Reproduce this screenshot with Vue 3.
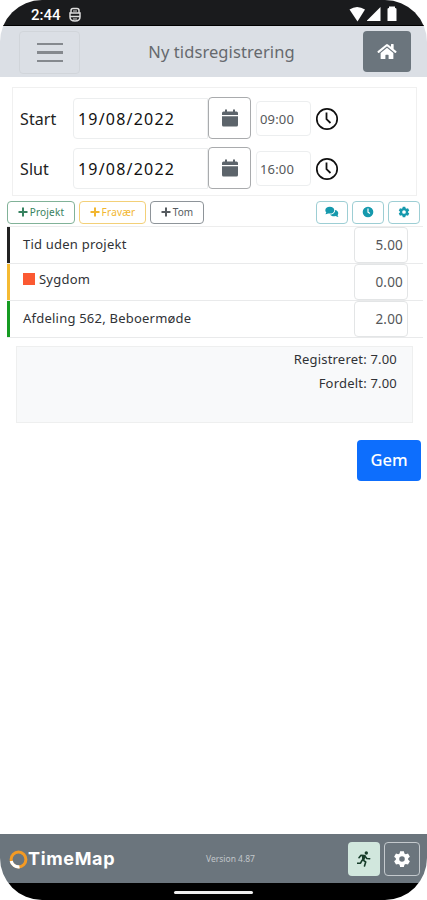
<template>
    <div class="phone">
        <div class="status">
            <span class="time">2:44</span>
            <svg class="app-icon" width="12" height="15" viewBox="0 0 12 15">
                <path d="M2 6V3.500Q2 1.500 4 1.500h4q2 0 2 2V6M1 6h10v4q0 4-5 4t-5-4zM1.500 9.500h9" fill="none" stroke="#ddd" stroke-width="1.500" />
                <path d="M4 4h4M4 12h4" stroke="#ddd" stroke-width="1" />
            </svg>
            <svg class="signals" width="50" height="16" viewBox="0 0 50 16">
                <path d="M0.5 3.5Q8 -1.5 16 3.5L8.5 15.5Z" fill="#fff" />
                <path d="M18 15V14.5L31.5 1V15Z" fill="#fff" />
                <path d="M38.500 3Q38.500 2 40 2V.5h6V2Q47.500 2 47.500 3V15h-9Z" fill="#fff" />
            </svg>
        </div>

        <header class="header">
            <button class="menu"><span></span><span></span><span></span></button>
            <h1>Ny tidsregistrering</h1>
            <button class="home">
                <svg width="20" height="17" viewBox="0 0 576 512">
                    <path fill="#fff" d="M280 148L96 300v164q0 16 16 16h112q16 0 16-16v-96q0-16 16-16h64q16 0 16 16v96q0 16 16 16h112q16 0 16-16V300L296 148q-8-6-16 0zM572 251l-84-69V44q0-12-12-12h-56q-12 0-12 12v72L318 43q-30-23-60 0L4 251q-8 8-2 17l26 31q8 8 17 2L280 107q8-6 16 0l235 194q9 6 17-2l26-31q6-9-2-17z" />
                </svg>
            </button>
        </header>

        <main>
            <section class="period">
                <div v-for="row in periods" :key="row.label" class="period-row">
                    <label>{{ row.label }}</label>
                    <div class="date">{{ row.date }}</div>
                    <button class="calendar">
                        <svg width="16" height="18" viewBox="0 0 16 18">
                            <path fill="#5c646b" d="M0 6V4q0-1.500 1.500-1.500H3V.5h2v2h6v-2h2v2h1.500Q16 2.500 16 4v2zM0 7.200h16V16q0 1.500-1.500 1.500h-13Q0 17.500 0 16z" />
                        </svg>
                    </button>
                    <div class="clock-time">{{ row.time }}</div>
                    <svg class="clock" width="24" height="24" viewBox="0 0 24 24">
                        <circle cx="12" cy="12" r="10.200" fill="none" stroke="#111" stroke-width="1.700" />
                        <path d="M11.500 5.500V12.200L15.500 16" fill="none" stroke="#111" stroke-width="1.800" />
                    </svg>
                </div>
            </section>

            <div class="toolbar">
                <button v-for="b in addButtons" :key="b.text" class="tool" :class="b.type">
                    <svg width="10" height="10" viewBox="0 0 10 10"><path d="M5 .5v9M.5 5h9" stroke="currentColor" stroke-width="2" /></svg>
                    <span>{{ b.text }}</span>
                </button>
                <button class="tool info first">
                    <svg width="14" height="12" viewBox="0 0 14 12">
                        <path fill="currentColor" d="M4.800.8C2.100.8.300 2.300.300 4.200c0 .9.400 1.600 1 2.200L.4 8.200c1.100 0 2-.3 2.600-.8 3.600.8 6.300-.8 6.300-3.200C9.300 2.300 7.500.8 4.800.8z" />
                        <path fill="currentColor" d="M10.100 4c.3 2.700-2.100 4.500-5.100 4.500 1 1.600 3.300 2.200 5.500 1.600.8.500 1.600.8 2.900.8l-.8-1.700C14 7.400 13.200 4.500 10.100 4z" />
                    </svg>
                </button>
                <button class="tool info">
                    <svg width="12" height="12" viewBox="0 0 12 12">
                        <circle cx="6" cy="6" r="5.300" fill="currentColor" />
                        <path d="M6 2.500V6.200l2 1.300" fill="none" stroke="#fff" stroke-width="1.200" />
                    </svg>
                </button>
                <button class="tool info">
                    <svg width="12" height="12" viewBox="0 0 24 24"><path :d="gear" fill="currentColor" fill-rule="evenodd" /></svg>
                </button>
            </div>

            <section class="lines">
                <div v-for="line in lines" :key="line.name" class="line" :class="line.type">
                    <div class="name"><i v-if="line.type === 'absence'"></i><span>{{ line.name }}</span></div>
                    <div class="hours">{{ line.hours }}</div>
                </div>
            </section>

            <section class="summary">
                <div>Registreret: 7.00</div>
                <div>Fordelt: 7.00</div>
            </section>

            <button class="save">Gem</button>
        </main>

        <footer class="footer">
            <div class="brand">
                <svg width="19" height="19" viewBox="0 0 19 19">
                    <circle cx="9.500" cy="9.500" r="7.400" fill="none" stroke="#f39a24" stroke-width="3" />
                    <path d="M2.200 11A7.400 7.400 0 0 0 10.500 16.800" fill="none" stroke="#fff" stroke-width="3.200" />
                </svg>
                <span>TimeMap</span>
            </div>
            <span class="version">Version 4.87</span>
            <button class="run">
                <svg width="14" height="16" viewBox="0 0 14 16">
                    <circle cx="9.300" cy="2" r="1.700" fill="#173d2a" />
                    <path d="M2 6.700l2-2.400 3.500.2-2 4.200 3.200 2.300-1.200 4M5 9.500l-1.500 2.700H.5M7.500 4.500l2.300 3 2.900.2" fill="none" stroke="#173d2a" stroke-width="1.600" stroke-linecap="round" stroke-linejoin="round" />
                    <path d="M4.800 4.500L8.800 4.500 7.500 9 5.200 9z" fill="#173d2a" />
                </svg>
            </button>
            <button class="settings">
                <svg width="18" height="18" viewBox="0 0 24 24"><path :d="gear" fill="#fff" fill-rule="evenodd" /></svg>
            </button>
        </footer>
        <div class="nav"><span></span></div>
    </div>
</template>

<script setup>
const periods = [
    { label: 'Start', date: '19/08/2022', time: '09:00' },
    { label: 'Slut', date: '19/08/2022', time: '16:00' }
];

const addButtons = [
    { text: 'Projekt', type: 'project' },
    { text: 'Fravær', type: 'leave' },
    { text: 'Tom', type: 'empty' }
];

const lines = [
    { name: 'Tid uden projekt', hours: '5.00', type: 'none' },
    { name: 'Sygdom', hours: '0.00', type: 'absence' },
    { name: 'Afdeling 562, Beboermøde', hours: '2.00', type: 'department' }
];

const gear = 'M9.500 1.500h5l.7 3 1.800 1 3-.9 2.500 4.300-2.300 2.100v2l2.300 2.100-2.500 4.300-3-.9-1.800 1-.7 3h-5l-.7-3-1.800-1-3 .9-2.500-4.300L3.800 13v-2L1.500 8.900 4 4.600l3 .9 1.800-1zM12 8.300a3.700 3.700 0 1 0 0 7.400 3.700 3.700 0 0 0 0-7.400z';
</script>

<style>
body {
    margin: 0;
    background: #fff;
}
</style>

<style scoped>
* {
    box-sizing: border-box;
}

.phone {
    width: 427px;
    height: 900px;
    display: flex;
    flex-direction: column;
    overflow: hidden;
    border-radius: 42px;
    background: #fff;
    color: #303236;
    font-family: "Noto Sans", "Open Sans", sans-serif;
    white-space: nowrap;
}

button {
    display: flex;
    align-items: center;
    justify-content: center;
    padding: 0;
    border: 0;
    background: none;
    font-family: inherit;
    flex: none;
}

svg {
    display: block;
    flex: none;
}

.status {
    display: flex;
    height: 26px;
    padding: 0 28px 0 31px;
    background: #1a1b1d;
    border-bottom: 1px solid #000;
    color: #fff;
    flex: none;
}

.time {
    font: 500 15px/30px Roboto, sans-serif;
    width: 38px;
}

.app-icon {
    margin-top: 7px;
}

.signals {
    margin: 6px 0 0 auto;
}

.header {
    display: flex;
    height: 51px;
    padding: 5px 16px 0 19px;
    background: #dbdfe5;
    flex: none;
}

.menu {
    width: 61px;
    height: 43px;
    flex-direction: column;
    gap: 6px;
    border: 1px solid #d1d5da;
    border-radius: 4px;
}

.menu span {
    width: 26px;
    height: 2.500px;
    background: #85898e;
}

h1 {
    flex: 1;
    margin: 0;
    text-align: center;
    color: #66696d;
    font-size: 16.500px;
    font-weight: 400;
    line-height: 42px;
    letter-spacing: .08px;
}

.home {
    width: 48px;
    height: 41px;
    background: #6b757d;
    border-radius: 4px;
}

main {
    display: flex;
    flex: 1;
    flex-direction: column;
}

.period {
    display: flex;
    flex-direction: column;
    gap: 8px;
    height: 109px;
    margin: 10px 10px 0 12px;
    padding: 9px 7px;
    border: 1px solid #f0f0f0;
}

.period-row {
    display: flex;
    align-items: center;
    height: 42px;
}

.period-row label {
    width: 53px;
    padding-top: 2px;
    color: #222;
    font-size: 16px;
    letter-spacing: .1px;
}

.date {
    width: 135px;
    height: 41px;
    padding-left: 4px;
    border: 1px solid #eceeef;
    border-radius: 4px 0 0 4px;
    color: #111;
    font-size: 16px;
    line-height: 40px;
    letter-spacing: 1.2px;
}

.calendar {
    width: 43px;
    height: 42px;
    border: 1px solid #a9abad;
    border-radius: 4px;
}

.clock-time {
    width: 55px;
    height: 35px;
    margin: 0 4px 0 5px;
    padding-left: 3px;
    border: 1px solid #eceeef;
    border-radius: 4px;
    color: #56585a;
    font-size: 13px;
    line-height: 34px;
    letter-spacing: .15px;
}

.clock {
    margin-top: 2px;
}

.toolbar {
    display: flex;
    height: 30px;
    padding: 5px 7px 0 7px;
    gap: 4px;
}

.tool {
    height: 23px;
    gap: 2px;
    border: 1px solid currentColor;
    border-radius: 4px;
    font-size: 10px;
    line-height: 20px;
    padding-bottom: 1px;
}

.project {
    width: 68px;
    border-color: #81b298;
    color: #378260;
    letter-spacing: .2px;
}

.leave {
    width: 67px;
    border-color: #f3d078;
    color: #f2b630;
    letter-spacing: .2px;
}

.empty {
    width: 54px;
    border-color: #8e9499;
    color: #565b60;
}

.info {
    width: 32px;
    border-color: #9dced4;
    color: #1599ad;
}

.first {
    margin-left: auto;
}

.lines {
    display: flex;
    flex-direction: column;
    margin: 0 4px 0 7px;
    border-top: 1px solid #ededed;
}

.line {
    display: flex;
    justify-content: space-between;
    height: 37px;
    padding-right: 15px;
    border-bottom: 1px solid #e9eaeb;
    box-shadow: inset 3px 0 #222;
}

.name {
    display: flex;
    align-items: center;
    height: 34px;
    padding-left: 16px;
    font-size: 13px;
    gap: 4px;
    letter-spacing: .22px;
}

.name i {
    width: 12px;
    height: 12px;
    background: #fb5932;
}

.absence {
    box-shadow: inset 3px 0 #f5ba32;
}

.absence .name {
    height: 29px;
}

.department {
    box-shadow: inset 3px 0 #169b22;
}

.hours {
    width: 54px;
    height: 36px;
    padding-right: 4px;
    border: 1px solid #e3e5e6;
    border-radius: 4px;
    color: #55575a;
    font-size: 13.500px;
    line-height: 35px;
    letter-spacing: .2px;
    text-align: right;
}

.summary {
    height: 77px;
    margin: 8px 14px 0 16px;
    padding: 0 15px;
    border: 1px solid #eeefef;
    background: #f8f9fa;
    font-size: 13px;
    line-height: 24px;
    letter-spacing: .2px;
    text-align: right;
}

.save {
    align-self: flex-end;
    width: 64px;
    height: 41px;
    margin: 17px 6px 0 0;
    padding-bottom: 2px;
    border-radius: 4px;
    background: #0d6efd;
    color: #fff;
    font-size: 16.500px;
    font-weight: 500;
}

.footer {
    display: grid;
    grid-template-columns: 197px 142px 32px 36px;
    height: 49px;
    padding: 8px 0 0 9px;
    background: #6b757d;
    flex: none;
}

.brand {
    display: flex;
    align-items: center;
    height: 34px;
    color: #fff;
    font: 700 18px/34px Inter, sans-serif;
    letter-spacing: .65px;
}

.version {
    color: #c1c6ca;
    font-size: 8.500px;
    line-height: 33px;
}

.run {
    width: 32px;
    height: 34px;
    border-radius: 4px;
    background: #d1e7dd;
}

.settings {
    width: 36px;
    height: 34px;
    margin-left: 4px;
    border: 1px solid #c4c9cd;
    border-radius: 4px;
}

.nav {
    display: flex;
    justify-content: center;
    height: 17px;
    padding-top: 8px;
    background: #000;
    flex: none;
}

.nav span {
    width: 79px;
    height: 3px;
    border-radius: 2px;
    background: #eee;
}
</style>
